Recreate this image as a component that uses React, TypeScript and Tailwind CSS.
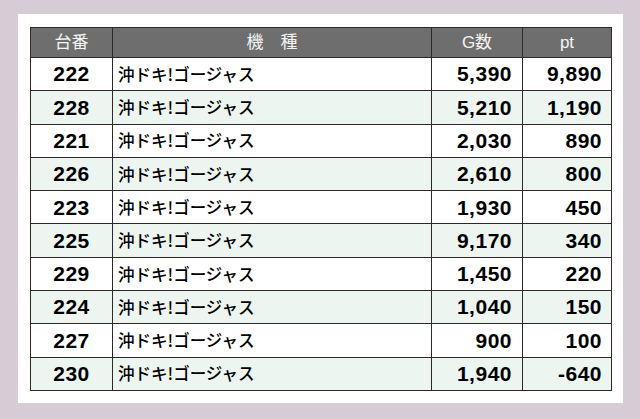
import React from 'react';

type Row = { no: string; name: string; games: string; pt: string };

const rows: Row[] = [
  { no: '222', name: '沖ドキ!ゴージャス', games: '5,390', pt: '9,890' },
  { no: '228', name: '沖ドキ!ゴージャス', games: '5,210', pt: '1,190' },
  { no: '221', name: '沖ドキ!ゴージャス', games: '2,030', pt: '890' },
  { no: '226', name: '沖ドキ!ゴージャス', games: '2,610', pt: '800' },
  { no: '223', name: '沖ドキ!ゴージャス', games: '1,930', pt: '450' },
  { no: '225', name: '沖ドキ!ゴージャス', games: '9,170', pt: '340' },
  { no: '229', name: '沖ドキ!ゴージャス', games: '1,450', pt: '220' },
  { no: '224', name: '沖ドキ!ゴージャス', games: '1,040', pt: '150' },
  { no: '227', name: '沖ドキ!ゴージャス', games: '900', pt: '100' },
  { no: '230', name: '沖ドキ!ゴージャス', games: '1,940', pt: '-640' },
];

const jp = "font-['Liberation_Sans','Noto_Sans_CJK_JP',sans-serif]";

export default function App() {
  return (
    <div className="w-[640px] h-[419px] bg-[#d6ccd6] pt-[14px] pl-[18px]">
      <div className="w-[605px] h-[389px] bg-white pt-[13px] pl-[12px]">
        <table className={`w-[581px] border-collapse table-fixed ${jp}`}>
          <colgroup>
            <col className="w-[82px]" />
            <col className="w-[319px]" />
            <col className="w-[91px]" />
            <col className="w-[89px]" />
          </colgroup>
          <thead>
            {/* header row */}
            <tr className="h-[30px] bg-[#6f6e6e] text-[#f4f4f4] text-[17px]">
              <th className="border border-[#2f2828] font-normal p-0">台番</th>
              <th className="border border-[#2f2828] font-normal p-0">機　種</th>
              <th className="border border-[#2f2828] font-normal p-0">G数</th>
              <th className="border border-[#2f2828] font-normal p-0">pt</th>
            </tr>
          </thead>
          <tbody>
            {rows.map((r, i) => (
              <tr key={r.no} className={`h-[33.3px] ${i % 2 === 1 ? 'bg-[#edf5f0]' : 'bg-white'} text-black`}>
                <td className="border border-[#2f2828] text-center font-bold text-[21px] tracking-[0.5px] p-0">{r.no}</td>
                <td className="border border-[#2f2828] text-[16.5px] font-medium pl-[5px] p-0 font-['Noto_Sans_CJK_JP',sans-serif]">{r.name}</td>
                <td className="border border-[#2f2828] text-right font-bold text-[21px] tracking-[0.5px] pr-[10px]">{r.games}</td>
                <td className="border border-[#2f2828] text-right font-bold text-[21px] tracking-[0.5px] pr-[9px]">{r.pt}</td>
              </tr>
            ))}
          </tbody>
        </table>
      </div>
    </div>
  );
}
